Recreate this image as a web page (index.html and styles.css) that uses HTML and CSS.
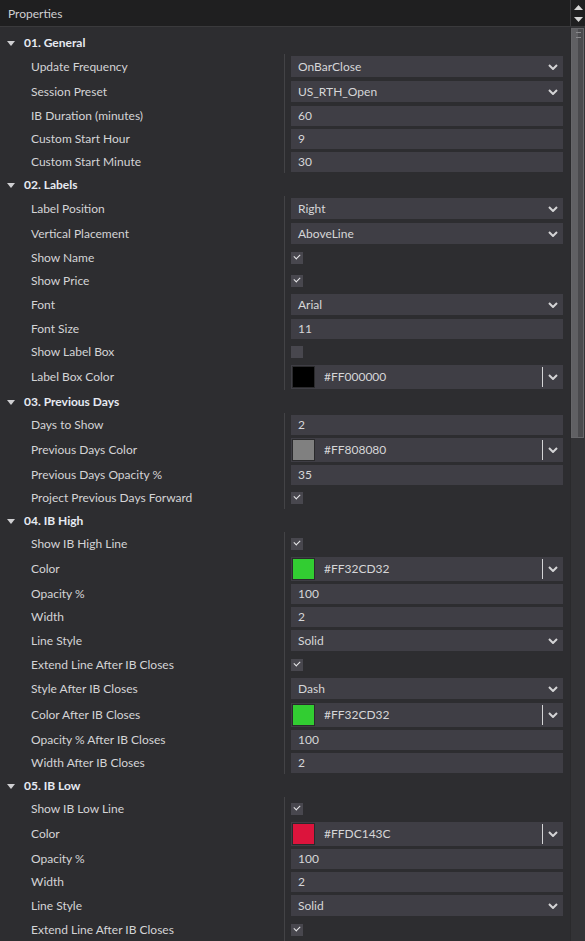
FILE: index.html
```html
<!DOCTYPE html>
<html lang="en">
<head>
    <meta charset="UTF-8">
    <title>Properties</title>
    <link rel="stylesheet" href="styles.css">
</head>
<body>
<div class="panel">

    <!-- ======= Title bar ======= -->
    <div class="titlebar">
        <span class="title">Properties</span>
        <div class="spin">
            <svg width="9" height="5" viewBox="0 0 9 5"><path d="M0 5 L4.5 0 L9 5 Z" fill="#d8d8d8"/></svg>
            <svg width="9" height="5" viewBox="0 0 9 5"><path d="M0 0 L4.5 5 L9 0 Z" fill="#d8d8d8"/></svg>
        </div>
    </div>

    <div class="body">
        <div class="content">

            <!-- ======= 01. General ======= -->
            <section class="group">
                <div class="group-head"><span class="caret"></span>01. General</div>
                <div class="rows">
                    <div class="row sel"><span class="label">Update Frequency</span><div class="value"><div class="select">OnBarClose<svg class="chev" viewBox="0 0 10 6"><path d="M1 1 L5 5 L9 1"/></svg></div></div></div>
                    <div class="row sel"><span class="label">Session Preset</span><div class="value"><div class="select">US_RTH_Open<svg class="chev" viewBox="0 0 10 6"><path d="M1 1 L5 5 L9 1"/></svg></div></div></div>
                    <div class="row txt"><span class="label">IB Duration (minutes)</span><div class="value"><div class="input">60</div></div></div>
                    <div class="row txt"><span class="label">Custom Start Hour</span><div class="value"><div class="input">9</div></div></div>
                    <div class="row txt"><span class="label">Custom Start Minute</span><div class="value"><div class="input">30</div></div></div>
                </div>
            </section>

            <!-- ======= 02. Labels ======= -->
            <section class="group">
                <div class="group-head"><span class="caret"></span>02. Labels</div>
                <div class="rows">
                    <div class="row sel"><span class="label">Label Position</span><div class="value"><div class="select">Right<svg class="chev" viewBox="0 0 10 6"><path d="M1 1 L5 5 L9 1"/></svg></div></div></div>
                    <div class="row sel"><span class="label">Vertical Placement</span><div class="value"><div class="select">AboveLine<svg class="chev" viewBox="0 0 10 6"><path d="M1 1 L5 5 L9 1"/></svg></div></div></div>
                    <div class="row chk"><span class="label">Show Name</span><div class="value"><span class="check on"></span></div></div>
                    <div class="row chk"><span class="label">Show Price</span><div class="value"><span class="check on"></span></div></div>
                    <div class="row sel"><span class="label">Font</span><div class="value"><div class="select">Arial<svg class="chev" viewBox="0 0 10 6"><path d="M1 1 L5 5 L9 1"/></svg></div></div></div>
                    <div class="row txt"><span class="label">Font Size</span><div class="value"><div class="input">11</div></div></div>
                    <div class="row chk"><span class="label">Show Label Box</span><div class="value"><span class="check"></span></div></div>
                    <div class="row clr"><span class="label">Label Box Color</span><div class="value"><div class="color"><span class="swatch" style="background:#000000"></span><span class="hex">#FF000000</span><span class="drop"><svg class="chev" viewBox="0 0 10 6"><path d="M1 1 L5 5 L9 1"/></svg></span></div></div></div>
                </div>
            </section>

            <!-- ======= 03. Previous Days ======= -->
            <section class="group">
                <div class="group-head"><span class="caret"></span>03. Previous Days</div>
                <div class="rows">
                    <div class="row txt"><span class="label">Days to Show</span><div class="value"><div class="input">2</div></div></div>
                    <div class="row clr"><span class="label">Previous Days Color</span><div class="value"><div class="color"><span class="swatch" style="background:#808080"></span><span class="hex">#FF808080</span><span class="drop"><svg class="chev" viewBox="0 0 10 6"><path d="M1 1 L5 5 L9 1"/></svg></span></div></div></div>
                    <div class="row txt"><span class="label">Previous Days Opacity %</span><div class="value"><div class="input">35</div></div></div>
                    <div class="row chk"><span class="label">Project Previous Days Forward</span><div class="value"><span class="check on"></span></div></div>
                </div>
            </section>

            <!-- ======= 04. IB High ======= -->
            <section class="group">
                <div class="group-head"><span class="caret"></span>04. IB High</div>
                <div class="rows">
                    <div class="row chk"><span class="label">Show IB High Line</span><div class="value"><span class="check on"></span></div></div>
                    <div class="row clr"><span class="label">Color</span><div class="value"><div class="color"><span class="swatch" style="background:#32cd32"></span><span class="hex">#FF32CD32</span><span class="drop"><svg class="chev" viewBox="0 0 10 6"><path d="M1 1 L5 5 L9 1"/></svg></span></div></div></div>
                    <div class="row txt"><span class="label">Opacity %</span><div class="value"><div class="input">100</div></div></div>
                    <div class="row txt"><span class="label">Width</span><div class="value"><div class="input">2</div></div></div>
                    <div class="row sel"><span class="label">Line Style</span><div class="value"><div class="select">Solid<svg class="chev" viewBox="0 0 10 6"><path d="M1 1 L5 5 L9 1"/></svg></div></div></div>
                    <div class="row chk"><span class="label">Extend Line After IB Closes</span><div class="value"><span class="check on"></span></div></div>
                    <div class="row sel"><span class="label">Style After IB Closes</span><div class="value"><div class="select">Dash<svg class="chev" viewBox="0 0 10 6"><path d="M1 1 L5 5 L9 1"/></svg></div></div></div>
                    <div class="row clr"><span class="label">Color After IB Closes</span><div class="value"><div class="color"><span class="swatch" style="background:#32cd32"></span><span class="hex">#FF32CD32</span><span class="drop"><svg class="chev" viewBox="0 0 10 6"><path d="M1 1 L5 5 L9 1"/></svg></span></div></div></div>
                    <div class="row txt"><span class="label">Opacity % After IB Closes</span><div class="value"><div class="input">100</div></div></div>
                    <div class="row txt"><span class="label">Width After IB Closes</span><div class="value"><div class="input">2</div></div></div>
                </div>
            </section>

            <!-- ======= 05. IB Low ======= -->
            <section class="group">
                <div class="group-head"><span class="caret"></span>05. IB Low</div>
                <div class="rows">
                    <div class="row chk"><span class="label">Show IB Low Line</span><div class="value"><span class="check on"></span></div></div>
                    <div class="row clr"><span class="label">Color</span><div class="value"><div class="color"><span class="swatch" style="background:#dc143c"></span><span class="hex">#FFDC143C</span><span class="drop"><svg class="chev" viewBox="0 0 10 6"><path d="M1 1 L5 5 L9 1"/></svg></span></div></div></div>
                    <div class="row txt"><span class="label">Opacity %</span><div class="value"><div class="input">100</div></div></div>
                    <div class="row txt"><span class="label">Width</span><div class="value"><div class="input">2</div></div></div>
                    <div class="row sel"><span class="label">Line Style</span><div class="value"><div class="select">Solid<svg class="chev" viewBox="0 0 10 6"><path d="M1 1 L5 5 L9 1"/></svg></div></div></div>
                    <div class="row chk"><span class="label">Extend Line After IB Closes</span><div class="value"><span class="check on"></span></div></div>
                </div>
            </section>

        </div>

        <!-- ======= Scrollbar ======= -->
        <div class="scrollbar">
            <div class="thumb"><span class="grip"></span></div>
        </div>
    </div>
</div>
</body>
</html>
```

FILE: styles.css
```css
html, body {
    margin: 0;
    height: 100%;
    overflow: hidden;
}

body {
    font-family: "Lato", "Liberation Sans", sans-serif;
    font-size: 12px;
    color: #d4d4d6;
    background-color: #2d2d30;
}

.panel {
    display: flex;
    flex-direction: column;
    height: 100%;
}

/* title bar */
.titlebar {
    display: flex;
    align-items: center;
    height: 26px;
    background-color: #1f1f20;
    border-bottom: 1px solid #3a3a3c;
    flex-shrink: 0;
}

.title {
    flex: 1;
    padding-left: 8px;
    color: #cfcfd2;
}

.spin {
    width: 14px;
    height: 26px;
    border-left: 1px solid #3a3a3c;
    display: flex;
    flex-direction: column;
    align-items: center;
    justify-content: center;
    gap: 7px;
}

.spin svg {
    display: block;
}

/* body */
.body {
    flex: 1;
    display: flex;
    min-height: 0;
}

.content {
    flex: 1;
    padding: 4px 7px 0 0;
    overflow: hidden;
}

.group-head {
    display: flex;
    align-items: center;
    height: 23px;
    font-weight: bold;
    color: #e6eaf2;
}

.caret {
    width: 0;
    height: 0;
    border-left: 4.5px solid transparent;
    border-right: 4.5px solid transparent;
    border-top: 5px solid #cfcfd2;
    margin: 1px 9px 0 7px;
}

.rows {
    display: flex;
    flex-direction: column;
}

.row {
    display: grid;
    grid-template-columns: 284px 1fr;
    align-items: center;
}

.row.sel { height: 25px; }
.row.txt { height: 23px; }
.row.chk { height: 23px; }
.row.clr { height: 27px; }

.label {
    padding-left: 31px;
    white-space: nowrap;
}

.value {
    height: 100%;
    display: flex;
    align-items: center;
    border-left: 1px solid #434346;
    padding-left: 6px;
}

.select, .input, .color {
    flex: 1;
    display: flex;
    align-items: center;
    background-color: #3f3e45;
    color: #d6d6d8;
}

.select {
    height: 21px;
    padding-left: 7px;
    justify-content: space-between;
}

.input {
    height: 20px;
    padding-left: 7px;
}

.color {
    height: 24px;
}

.chev {
    width: 10px;
    height: 6px;
    fill: none;
    stroke: #d4d4d6;
    stroke-width: 2;
    margin-right: 5px;
}

.swatch {
    width: 23px;
    height: 22px;
    margin-left: 1px;
    border: 1px solid #2a2a2c;
    box-sizing: border-box;
}

.hex {
    flex: 1;
    padding-left: 9px;
}

.drop {
    height: 20px;
    display: flex;
    align-items: center;
    border-left: 1px solid #d4d4d6;
    padding-left: 5px;
}

.check {
    width: 12px;
    height: 12px;
    background-color: #48474e;
    position: relative;
}

.check.on::after {
    content: "";
    position: absolute;
    left: 3px;
    top: 2px;
    width: 5px;
    height: 3px;
    border-left: 1.5px solid #e8e8ea;
    border-bottom: 1.5px solid #e8e8ea;
    transform: rotate(-45deg);
}

/* scrollbar */
.scrollbar {
    width: 15px;
    background-color: #333336;
    border-left: 1px solid #2a2a2c;
    padding-top: 1px;
    box-sizing: border-box;
}

.thumb {
    height: 410px;
    margin: 0 1px 0 0;
    background: linear-gradient(to right, #606063 0, #606063 6px, #4a4a4d 6px);
    border: 1px solid #666669;
    box-sizing: border-box;
    position: relative;
}

.grip {
    position: absolute;
    right: 2px;
    top: 3px;
    width: 5px;
    height: 4px;
    border-top: 1px solid #8a8a8d;
    border-bottom: 1px solid #8a8a8d;
}
```
